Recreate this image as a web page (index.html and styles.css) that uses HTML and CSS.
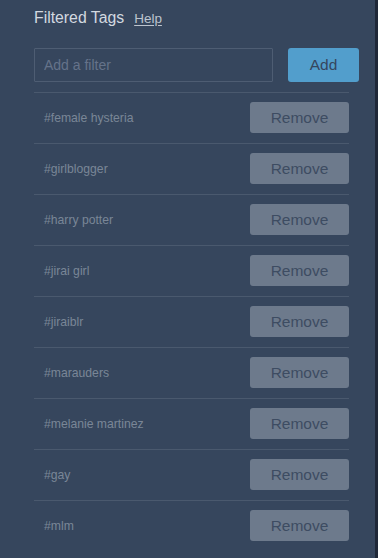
FILE: index.html
```html
<!DOCTYPE html>
<html lang="en">
<head>
<meta charset="utf-8">
<title>Filtered Tags</title>
<link rel="stylesheet" href="styles.css">
</head>
<body>
<div class="page">
  <section class="panel">
    <header class="head">
      <h2 class="title">Filtered Tags</h2>
      <a class="help" href="#">Help</a>
    </header>
    <form class="add-row">
      <input class="filter-input" type="text" placeholder="Add a filter">
      <button class="btn-add" type="button">Add</button>
    </form>
    <ul class="tags">
      <li class="tag"><span class="tag-name">#female hysteria</span><button class="btn-remove" type="button">Remove</button></li>
      <li class="tag"><span class="tag-name">#girlblogger</span><button class="btn-remove" type="button">Remove</button></li>
      <li class="tag"><span class="tag-name">#harry potter</span><button class="btn-remove" type="button">Remove</button></li>
      <li class="tag"><span class="tag-name">#jirai girl</span><button class="btn-remove" type="button">Remove</button></li>
      <li class="tag"><span class="tag-name">#jiraiblr</span><button class="btn-remove" type="button">Remove</button></li>
      <li class="tag"><span class="tag-name">#marauders</span><button class="btn-remove" type="button">Remove</button></li>
      <li class="tag"><span class="tag-name">#melanie martinez</span><button class="btn-remove" type="button">Remove</button></li>
      <li class="tag"><span class="tag-name">#gay</span><button class="btn-remove" type="button">Remove</button></li>
      <li class="tag"><span class="tag-name">#mlm</span><button class="btn-remove" type="button">Remove</button></li>
    </ul>
  </section>
  <div class="edge"></div>
</div>
</body>
</html>
```

FILE: styles.css
```css
html, body {
  margin: 0;
  padding: 0;
  height: 100%;
  background: #36465d;
  font-family: "Liberation Sans", Arial, sans-serif;
  overflow: hidden;
}

.page {
  display: flex;
  height: 558px;
}

.panel {
  flex: 1;
  padding: 8px 0 0 34px;
}

.edge {
  width: 3px;
  background: #1f2838;
}

.head {
  display: flex;
  align-items: baseline;
  gap: 10px;
  height: 20px;
  line-height: 20px;
}

.title {
  margin: 0;
  font-size: 15.8px;
  font-weight: normal;
  color: #d3d9e0;
}

.help {
  font-size: 13.5px;
  color: #bcc4ce;
  text-decoration: underline;
  text-underline-offset: 2px;
}

.add-row {
  display: flex;
  gap: 15px;
  margin: 20px 0 0;
  width: 325px;
}

.filter-input {
  box-sizing: border-box;
  width: 239px;
  height: 34px;
  margin: 0;
  padding: 0 9px;
  background: transparent;
  border: 1px solid #4e5d73;
  border-radius: 1px;
  font-family: inherit;
  font-size: 14px;
  color: #c3cad3;
  outline: none;
}

.filter-input::placeholder {
  color: #65738a;
}

.btn-add {
  width: 71px;
  height: 34px;
  margin: 0;
  padding: 0;
  border: none;
  border-radius: 3px;
  background: #529ecc;
  color: #36465d;
  font-family: inherit;
  font-size: 15.5px;
}

.tags {
  list-style: none;
  margin: 10px 0 0;
  padding: 0;
  width: 315px;
}

.tag {
  display: flex;
  align-items: center;
  justify-content: space-between;
  border-top: 1px solid #4a596e;
  padding: 9px 0 10px 10px;
}

.tag-name {
  font-size: 12.2px;
  color: #7a8697;
}

.btn-remove {
  width: 99px;
  height: 31px;
  margin: 0;
  padding: 0;
  border: none;
  border-radius: 3px;
  background: #6d7a8c;
  color: #3d4c62;
  font-family: inherit;
  font-size: 15.5px;
}
```
